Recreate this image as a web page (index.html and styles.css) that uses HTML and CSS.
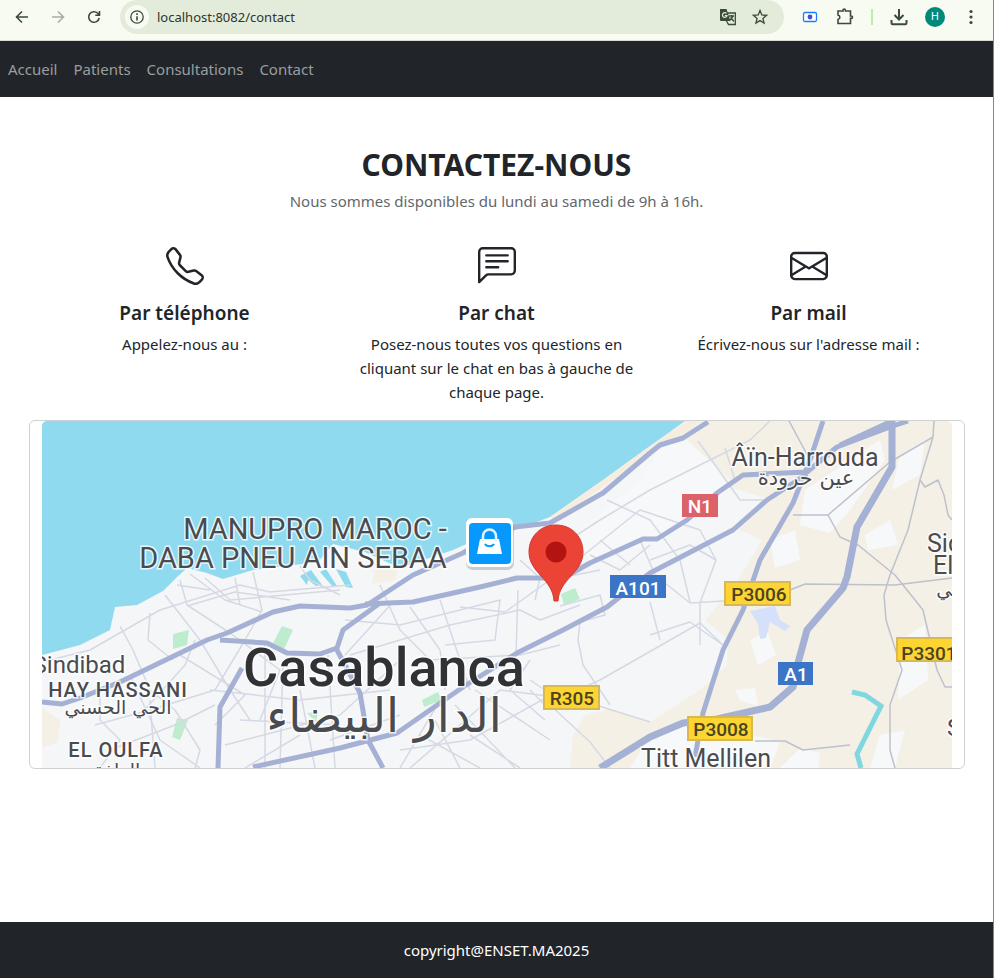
FILE: index.html
```html
<!DOCTYPE html>
<html lang="fr">
<head>
<meta charset="utf-8">
<meta name="viewport" content="width=device-width, initial-scale=1">
<title>Contact</title>
<link rel="stylesheet" href="styles.css">
</head>
<body>
<div class="toolbar">
  <div class="history">
    <button class="tool" type="button" aria-label="Retour"><svg viewBox="0 0 18 18"><path d="M15 9H4M9 3.500 3.500 9 9 14.500" class="line"/></svg></button>
    <button class="tool tool-off" type="button" aria-label="Suivant"><svg viewBox="0 0 18 18"><path d="M3 9h11M9 3.500 14.500 9 9 14.500" class="line"/></svg></button>
    <button class="tool" type="button" aria-label="Actualiser"><svg viewBox="0 0 18 18"><path d="M14.200 10A5.300 5.300 0 1 1 12.800 5.300L14.200 7M14.500 3V7.200H10.300" class="line"/></svg></button>
  </div>
  <div class="address">
    <button class="site-info" type="button" aria-label="Informations"><svg viewBox="0 0 16 16"><circle cx="8" cy="8" r="6.200" class="thin"/><path d="M8 7.200V11.500M8 4.300V5.900" class="line"/></svg></button>
    <input class="url" type="text" value="localhost:8082/contact" aria-label="Adresse">
    <button class="tool" type="button" aria-label="Traduire"><svg viewBox="0 0 18 18"><path d="M8 5h8.300v11.500H9.500L7.500 13" class="thin"/><path d="M1 1h6.500L11.500 13H2a1 1 0 0 1-1-1z" fill="currentColor"/><path d="M7.500 5.500A2.300 2.300 0 1 0 8 7.500H5.800" fill="none" stroke="#e3ecdb" stroke-width="1.200"/><path d="M10 8h5M12.500 7v1M14 8q-1 3-3 4M11.500 9.500l3.500 4" class="thin"/></svg></button>
    <button class="tool" type="button" aria-label="Favori"><svg viewBox="0 0 18 18"><path d="M9 2.500 10.800 7 15.600 7.300 11.900 10.400 13.100 15.100 9 12.600 4.900 15.100 6.100 10.400 2.400 7.300 7.200 7z" class="thin"/></svg></button>
  </div>
  <button class="tool" type="button" aria-label="Enregistreur"><svg viewBox="0 0 18 18"><rect x="2.500" y="4.500" width="13" height="9" rx="1.500" fill="#fff" stroke="#1a7cff" stroke-width="1.300"/><circle cx="9" cy="9" r="2.400" fill="#3f51d5"/></svg></button>
  <button class="tool" type="button" aria-label="Extensions"><svg viewBox="0 0 18 18"><path d="M2 3H7V2.200a1 1 0 0 1 2.400 0V3H14.500V8h.8a1.200 1.200 0 0 1 0 2.400H14.500V15.500H2V11.500a2.300 2.300 0 0 0 0-4.500z" class="line"/></svg></button>
  <span class="divider"></span>
  <button class="tool" type="button" aria-label="Téléchargements"><svg viewBox="0 0 18 18"><path d="M9 1v10M4.500 7 9 11.500 13.500 7M1.500 12v3a1.200 1.200 0 0 0 1.200 1.200H15.300a1.200 1.200 0 0 0 1.200-1.200V12" class="heavy"/></svg></button>
  <button class="avatar" type="button">H</button>
  <button class="tool" type="button" aria-label="Menu"><svg viewBox="0 0 18 18" fill="currentColor"><circle cx="9" cy="3.500" r="1.600"/><circle cx="9" cy="9" r="1.600"/><circle cx="9" cy="14.500" r="1.600"/></svg></button>
</div>

<nav class="navbar">
  <a href="#">Accueil</a>
  <a href="#">Patients</a>
  <a href="#">Consultations</a>
  <a href="#">Contact</a>
</nav>

<main class="container">
  <h1>CONTACTEZ-NOUS</h1>
  <p class="lead">Nous sommes disponibles du lundi au samedi de 9h à 16h.</p>
  <div class="channels">
    <section>
      <svg class="icon" viewBox="0 0 16 16"><path d="M3.654 1.328a.678.678 0 0 0-1.015-.063L1.605 2.300c-.483.484-.661 1.169-.45 1.770a17.568 17.568 0 0 0 4.168 6.608 17.569 17.569 0 0 0 6.608 4.168c.601.211 1.286.033 1.770-.45l1.034-1.034a.678.678 0 0 0-.063-1.015l-2.307-1.794a.678.678 0 0 0-.58-.122l-2.190.547a1.745 1.745 0 0 1-1.657-.459L5.482 8.062a1.745 1.745 0 0 1-.46-1.657l.548-2.190a.678.678 0 0 0-.122-.58L3.654 1.328zM1.884.511a1.745 1.745 0 0 1 2.612.163L6.290 2.980c.329.423.445.974.315 1.494l-.547 2.190a.678.678 0 0 0 .178.643l2.457 2.457a.678.678 0 0 0 .644.178l2.189-.547a1.745 1.745 0 0 1 1.494.315l2.306 1.794c.829.645.905 1.870.163 2.611l-1.034 1.034c-.74.74-1.846 1.065-2.877.702a18.634 18.634 0 0 1-7.010-4.420 18.634 18.634 0 0 1-4.420-7.009c-.362-1.030-.037-2.137.703-2.877L1.885.511z"/></svg>
      <h2>Par téléphone</h2>
      <p>Appelez-nous au :</p>
    </section>
    <section>
      <svg class="icon" viewBox="0 0 16 16"><path d="M14 1a1 1 0 0 1 1 1v8a1 1 0 0 1-1 1H4.414A2 2 0 0 0 3 11.586l-2 2V2a1 1 0 0 1 1-1h12zM2 0a2 2 0 0 0-2 2v12.793a.5.5 0 0 0 .854.353l2.853-2.853A1 1 0 0 1 4.414 12H14a2 2 0 0 0 2-2V2a2 2 0 0 0-2-2H2z"/><path d="M3 3.500a.5.5 0 0 1 .5-.5h9a.5.5 0 0 1 0 1h-9a.5.5 0 0 1-.5-.5zM3 6a.5.5 0 0 1 .5-.5h9a.5.5 0 0 1 0 1h-9A.5.5 0 0 1 3 6zm0 2.500a.5.5 0 0 1 .5-.5h5a.5.5 0 0 1 0 1h-5a.5.5 0 0 1-.5-.5z"/></svg>
      <h2>Par chat</h2>
      <p>Posez-nous toutes vos questions en cliquant sur le chat en bas à gauche de chaque page.</p>
    </section>
    <section>
      <svg class="icon" viewBox="0 0 16 16"><path d="M0 4a2 2 0 0 1 2-2h12a2 2 0 0 1 2 2v8a2 2 0 0 1-2 2H2a2 2 0 0 1-2-2V4Zm2-1a1 1 0 0 0-1 1v.217l7 4.200 7-4.200V4a1 1 0 0 0-1-1H2Zm13 2.383-4.708 2.825L15 11.105V5.383Zm-.034 6.876-5.640-3.471L8 9.583l-1.326-.795-5.640 3.470A1 1 0 0 0 2 13h12a1 1 0 0 0 .966-.741ZM1 11.105l4.708-2.897L1 5.383v5.722Z"/></svg>
      <h2>Par mail</h2>
      <p>Écrivez-nous sur l'adresse mail :</p>
    </section>
  </div>

  <div class="card">
    <svg class="map" viewBox="42 421 910 347" role="img" aria-label="Carte de Casablanca">
      <rect x="42" y="421" width="910" height="347" fill="#f5f6f8"/>
      <g fill="#f4f0e5">
        <path d="M685 421H952V768H570L573 735 585 715 610 709 650 722 700 690 727 665 728 640 705 620 735 585 762 540 735 528 770 500 740 490 700 480 683 440 650 445 620 475 560 515 600 482z"/>
        <path d="M42 708 60 720 58 742 42 748z"/>
        <path d="M375 568 398 565 396 580 372 584z"/>
      </g>
      <g fill="#f7f8fa">
        <path d="M658 450 685 438 730 480 705 500 690 520 650 545 590 560 575 535 640 480z"/>
        <path d="M805 490 850 460 880 440 885 460 850 510 830 533 800 525z"/>
        <path d="M900 455 925 440 920 475 892 490z"/>
        <path d="M770 540 795 530 800 560 775 568zM750 640 768 632 776 655 758 665zM735 690 755 688 758 706 740 700zM865 535 890 520 898 545 868 550zM900 640 925 625 928 680 898 700zM800 748 820 753 818 768H780zM880 735 905 730 895 768H870z"/>
        <path d="M650 737 700 722 780 742 770 768H630z"/>
      </g>
      <g fill="#d5e0fa"><path d="M750 611 775 606 780 620 790 626 785 631 770 622 766 638 760 639 758 624z"/></g>
      <g fill="#bdeccf">
        <path d="M173 634 189 630 187 645 173 649zM282 626 293 630 284 649 273 643zM177 718 188 720 180 740 172 737zM422 700 438 692 442 700 424 707zM561 594 575 588 580 599 564 605zM307 713 318 712 316 722z"/>
      </g>
      <path fill="#8fdaee" d="M42 421H685L650 446 603 480 550 517 515 530 480 538 453 550 400 568 365 552 333 544 318 562 253 570 223 579 207 573 187 568 177 577 163 591 137 605 115 607 110 630 80 645 42 655z"/>
      <path fill="#f6eddf" d="M550 517 603 480 650 446 690 421H700L650 453 603 487 555 520z"/>
      <path fill="#8fdaee" d="M300 576 311 570 322 585 316 586 308 580 307 585zM326 569 337 586 333 587 320 572zM336 569 346 572 353 588 346 587z"/>

      <g class="street">
        <path d="M42 662 90 650 160 610 240 585 270 592 350 585M120 626 133 650 150 690 175 710M150 613 148 640 173 660M165 595 200 640 230 690 250 720M180 580 187 605 230 633M190 574 225 600 262 612M177 585 210 590M205 578 230 600 340 590M235 578 240 605M253 572 262 610 245 640 215 690M300 566 310 580 340 595M187 606 235 592 290 600M195 640 185 665 140 715M180 655 245 695 215 725M230 633 280 670 260 720M100 690 100 720 120 740 100 768M130 675 160 740 200 768M95 725 150 710 215 690M110 750 175 725 215 705M150 700 155 768M175 710 200 750 195 768M210 690 300 700 390 690M240 720 340 725M265 645 265 768M283 660 280 768M300 690 315 768M328 655 335 768M225 745 340 715 400 660M245 768 300 735"/>
        <path d="M380 585 400 630 430 660 520 655 560 645M350 655 400 640 450 625 520 610M345 620 400 625 500 600 495 640 445 645M395 600 345 655M410 607 440 650 445 690M440 600 470 690M518 590 516 655M460 607 505 612 550 580 600 570M560 606 600 595 605 615 580 622 578 640 583 665 600 690 610 705M530 690 545 705 600 680 700 623 723 645M520 610 540 620 580 605M455 705 515 768M475 690 550 740M500 690 580 700 650 722M440 700 400 768M435 720 460 768M420 735 480 768M400 715 330 740M410 768 460 725 500 690M400 750 470 740 560 690M550 705 590 742 610 768M470 735 520 768M530 680 560 700M530 660 510 690 545 720"/>
        <path d="M535 562 600 520 650 490 750 440 770 421M565 570 640 510 700 530 716 560 700 603M607 500 650 520 680 560 690 602M640 540 655 575 690 603 740 600M650 602 660 640M700 603 700 645M650 635 690 622 723 645M698 441 740 500 765 500M725 448 735 480M650 560 690 545 716 560M520 560 540 578 535 600M590 555 620 570 650 545M600 540 630 565"/>
      </g>
      <g class="country">
        <path d="M789 421 810 460M793 515 828 515 890 462 933 437 934 421M828 515 840 537 858 545 895 575 923 610 930 640 937 670 945 687H952M933 437 920 480 908 530 890 575 884 595 886 620 902 670 890 705 890 750 895 768M920 480 925 487 938 480 944 495 948 515 952 520M790 590 805 584 895 585 952 578M755 741 785 741 803 750 850 745"/>
      </g>
      <g class="road">
        <path d="M42 702 62 704 80 698 120 682 207 640 227 633 273 612 300 606 350 608 367 605 413 575 463 553 480 543 515 527 550 523 603 493 650 453 660 445 683 438 708 422"/>
        <path d="M365 604 413 602 480 587 517 578 563 578 590 563 643 539 657 539 687 520 717 493 743 475 807 472 837 447 890 427 908 421"/>
        <path d="M253 767 340 748 397 733 463 687 517 653 563 630 607 607 650 573 733 530 767 500 807 474"/>
        <path d="M823 421 810 460 793 503 760 560 743 610 723 650 703 713 695 757"/>
        <path d="M242 668 220 707 218 768M220 640 267 643 287 653 320 654 337 648 343 630 380 603M337 650 360 693 368 740 383 768M840 445 892 421"/>
      </g>
      <path class="road wide" d="M892 421 892 467 857 527 847 577 843 588 807 630 798 663 793 687 770 707 717 719 683 723 650 737 600 768"/>
      <path d="M852 692 865 695 881 706 857 754 861 768" fill="none" stroke="#80d7df" stroke-width="5"/>

      <g class="label">
        <text x="315" y="539" font-size="29">MANUPRO MAROC -</text>
        <text x="293" y="568" font-size="29">DABA PNEU AIN SEBAA</text>
        <text x="805" y="466" font-size="25">Âïn-Harrouda</text>
        <text x="806" y="485" font-size="21" class="arabic">عين حرودة</text>
        <text x="79" y="673" font-size="24">Sindibad</text>
        <text x="118" y="697" font-size="20" class="district">HAY HASSANI</text>
        <text x="118" y="714" font-size="19" class="arabic">الحي الحسني</text>
        <text x="116" y="757" font-size="20" class="district">EL OULFA</text>
        <text x="117" y="777" font-size="19" class="arabic">الولفة</text>
        <text x="384" y="686" font-size="54" class="city">Casablanca</text>
        <text x="384" y="732" font-size="47" class="arabic">الدار البيضاء</text>
        <text x="706" y="767" font-size="25">Titt Mellilen</text>
        <text x="927" y="552" font-size="25" class="start">Sidi</text>
        <text x="933" y="574" font-size="25" class="start">El</text>
        <text x="950" y="596" font-size="19" class="arabic">حي</text>
        <text x="947" y="736" font-size="24" class="start">S</text>
      </g>

      <rect x="466" y="520" width="48" height="50" rx="7" fill="#7e919c" opacity=".4"/>
      <rect x="466" y="518" width="47" height="49" rx="6" fill="#fff"/>
      <rect x="469" y="523" width="42" height="41" rx="4" fill="#0798fb"/>
      <path d="M480 539H499L502 554H477z" fill="#fff"/>
      <path d="M483 541V536a6.500 6.500 0 0 1 13 0v5" fill="none" stroke="#e4f4ff" stroke-width="2.500"/>
      <path d="M485 544a5 4 0 0 0 9 0" fill="none" stroke="#0798fb" stroke-width="2"/>
      <path d="M556 525C540 525 529 537 529 552 529 573 553 579 554 601H558C559 579 583 573 583 552 583 537 572 525 556 525z" fill="#eb4335" stroke="#cc3a30"/>
      <circle cx="556" cy="552" r="10.500" fill="#b31412"/>

      <g class="shield">
        <rect x="682" y="494" width="36" height="23" fill="#dc626a"/><text x="700" y="513" class="light">N1</text>
        <rect x="610" y="575" width="56" height="23" fill="#3c75c5"/><text x="638" y="595" class="light">A101</text>
        <rect x="778" y="662" width="35" height="23" fill="#3c75c5"/><text x="796" y="681" class="light">A1</text>
        <g fill="#fcd532" stroke="#d8b951" stroke-width="2">
          <rect x="725" y="582" width="65" height="23"/><rect x="544" y="686" width="55" height="23"/><rect x="688" y="717" width="64" height="23"/><rect x="897" y="638" width="64" height="23"/>
        </g>
        <text x="759" y="601">P3006</text><text x="572" y="705">R305</text><text x="721" y="736">P3008</text><text x="929" y="660">P3301</text>
      </g>
    </svg>
  </div>
</main>

<footer class="footer">copyright@ENSET.MA2025</footer>
</body>
</html>
```
FILE: styles.css
```css
* { box-sizing: border-box; }

body {
  margin: 0;
  min-height: 100vh;
  display: flex;
  flex-direction: column;
  border-right: 1px solid #85878a;
  background: #fff;
  color: #212529;
  font: 15px/24px "Noto Sans", "Open Sans", sans-serif;
}

h1, h2, p { margin: 0; }
button { border: 0; padding: 0; background: none; color: inherit; font: inherit; }

.toolbar {
  height: 41px;
  display: flex;
  align-items: center;
  gap: 17px;
  padding: 0 13px 7px;
  background: #f8fbf1;
  border-bottom: 1px solid #d9ddd3;
  color: #3c4a38;
}
.history { display: flex; gap: 18px; }
.tool { display: block; flex: none; width: 18px; height: 18px; }
.tool svg, .site-info svg { display: block; width: 100%; height: 100%; }
.tool-off { color: #a9ada4; }
.line { fill: none; stroke: currentColor; stroke-width: 1.6; }
.thin { fill: none; stroke: currentColor; stroke-width: 1.3; }
.heavy { fill: none; stroke: currentColor; stroke-width: 2; }

.address {
  flex: 1;
  display: flex;
  align-items: center;
  gap: 14px;
  height: 34px;
  padding: 0 15px 0 5px;
  border-radius: 17px;
  background: #e3ecdb;
}
.address .url {
  flex: 1;
  min-width: 0;
  margin-left: -6px;
  padding: 0;
  border: 0;
  outline: 0;
  background: none;
  color: #30352c;
  font: 13px/20px "Noto Sans", "Open Sans", sans-serif;
}
.site-info {
  width: 24px;
  height: 24px;
  padding: 4px;
  border-radius: 50%;
  background: #f8fbf1;
}
.divider { width: 2px; height: 16px; background: #b9efa6; }
.avatar {
  width: 20px;
  height: 20px;
  border-radius: 50%;
  background: #00897b;
  color: #fff;
  font: 11px/20px Roboto, sans-serif;
}

.navbar {
  height: 56px;
  display: flex;
  align-items: center;
  gap: 16px;
  padding: 0 8px;
  background: #212529;
}
.navbar a { color: #9b9d9f; text-decoration: none; }

.container {
  width: 100%;
  max-width: 960px;
  margin: 0 auto;
  padding: 50px 12px 32px;
  text-align: center;
}
h1 { font-size: 30px; line-height: 36px; font-weight: 700; }
.lead { margin-top: 6px; color: #63676b; }

.channels {
  display: grid;
  grid-template-columns: repeat(3, 1fr);
  margin-top: 34px;
}
.channels section { padding: 0 12px; }
.icon { display: block; width: 38px; height: 38px; margin: 0 auto 16px; fill: currentColor; }
h2 { margin-bottom: 7px; font-size: 19px; line-height: 24px; font-weight: 600; }

.card {
  margin-top: 16px;
  padding: 0 12px;
  border: 1px solid #d0d1d2;
  border-radius: 6px;
}
.map { display: block; width: 100%; height: auto; border-radius: 5px 5px 0 0; }
.street, .country, .road { fill: none; stroke-linejoin: round; }
.street { stroke: #d5d9e3; stroke-width: 1.5; }
.country { stroke: #bcc1cd; stroke-width: 1.5; }
.road { stroke: #a5b1d4; stroke-width: 5; }
.wide { stroke-width: 7; }
.label {
  fill: #4a4b4f;
  stroke: #fff;
  stroke-width: 3;
  stroke-opacity: 0.8;
  paint-order: stroke;
  font-family: Roboto, sans-serif;
  text-anchor: middle;
}
.label .start { text-anchor: start; }
.label .arabic { font-family: "DejaVu Sans", sans-serif; }
.label .district { font-weight: 500; letter-spacing: 1px; }
.label .city { fill: #303236; font-weight: 500; }
.shield { font: 500 19px Roboto, sans-serif; fill: #4b431f; text-anchor: middle; }
.shield .light { fill: #fff; }

.footer {
  margin-top: auto;
  padding: 16px;
  background: #212529;
  color: #fff;
  text-align: center;
}
```
